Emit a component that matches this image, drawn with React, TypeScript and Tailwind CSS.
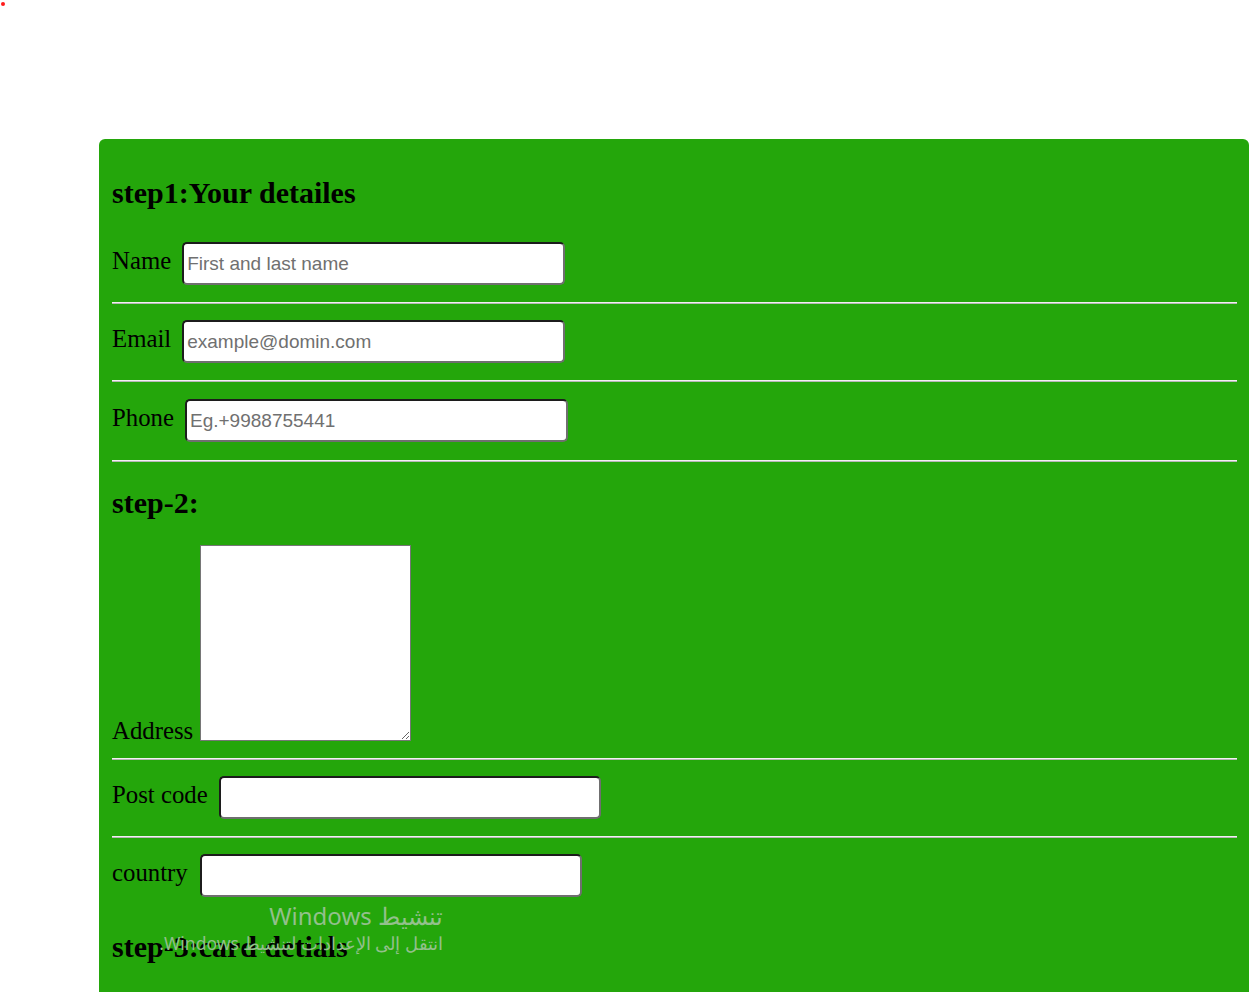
import React from "react"

const serif = { fontFamily: '"Liberation Serif", "Times New Roman", serif' }

const inputCls =
  "h-[43px] rounded-[5px] border-2 border-t-[#1c1c1c] border-l-[#1c1c1c] border-b-[#6f6f6f] border-r-[#6f6f6f] bg-white px-[3px] text-[19px] text-black placeholder:text-[#707070] outline-none"

const Divider = () => (
  <div className="h-[2px] border-t border-t-[#f2f2f2] border-b border-b-[#b8b8b8]" />
)

const Field = ({ label, placeholder, width = 383, gap = 11 }: { label: string; placeholder?: string; width?: number; gap?: number }) => (
  <div className="flex items-center" style={{ gap }}>
    <label className="text-[24.8px] leading-none text-black -mt-[5px]" style={serif}>{label}</label>
    <input
      className={inputCls}
      style={{ width, fontFamily: '"Liberation Sans", Arial, sans-serif' }}
      placeholder={placeholder}
    />
  </div>
)

export default function App() {
  return (
    <div className="relative min-h-[992px] bg-white overflow-hidden">
      <div className="absolute left-[1px] top-[2px] h-[4px] w-[4px] rounded-full bg-[#ff1a1a]" />

      <div className="pt-[139px] pl-[99px]">
        <div className="w-[1150px] h-[853px] rounded-t-[6px] bg-[#24a60b] pl-[13px] pr-[12px]" style={serif}>
          <h2 className="pt-[39px] text-[30px] font-bold leading-none text-black">step1:Your detailes</h2>

          <div className="mt-[34px]">
            <Field label="Name" placeholder="First and last name" />
          </div>
          <div className="mt-[17px]"><Divider /></div>

          <div className="mt-[16px]">
            <Field label="Email" placeholder="example@domin.com" />
          </div>
          <div className="mt-[17px]"><Divider /></div>

          <div className="mt-[17px]">
            <Field label="Phone" placeholder="Eg.+9988755441" />
          </div>
          <div className="mt-[18px]"><Divider /></div>

          <h2 className="mt-[26px] text-[30px] font-bold leading-none text-black">step-2:</h2>

          <div className="mt-[27px] flex items-end gap-[7px]">
            <label className="text-[24.8px] leading-none text-black mb-[-3px]">Address</label>
            <textarea className="h-[196px] w-[211px] border border-[#767676] bg-white" />
          </div>
          <div className="mt-[17px]"><Divider /></div>

          <div className="mt-[16px]">
            <Field label="Post code" width={382} gap={11} />
          </div>
          <div className="mt-[17px]"><Divider /></div>

          <div className="mt-[16px]">
            <Field label="country" width={382} gap={12} />
          </div>

          <h2 className="mt-[35px] text-[30px] font-bold leading-none text-black">step-3:card detials</h2>
        </div>
      </div>

      <div
        className="pointer-events-none absolute left-[150px] top-[900px] w-[293px] text-right text-[#93c08c]"
        style={{ fontFamily: '"Noto Sans", "Open Sans", sans-serif' }}
      >
        <div className="text-[24px] leading-[32px]">Windows تنشيط</div>
        <div className="text-[17.5px] leading-[22px]" dir="rtl">انتقل إلى الإعدادات لتنشيط Windows.</div>
      </div>
    </div>
  )
}
